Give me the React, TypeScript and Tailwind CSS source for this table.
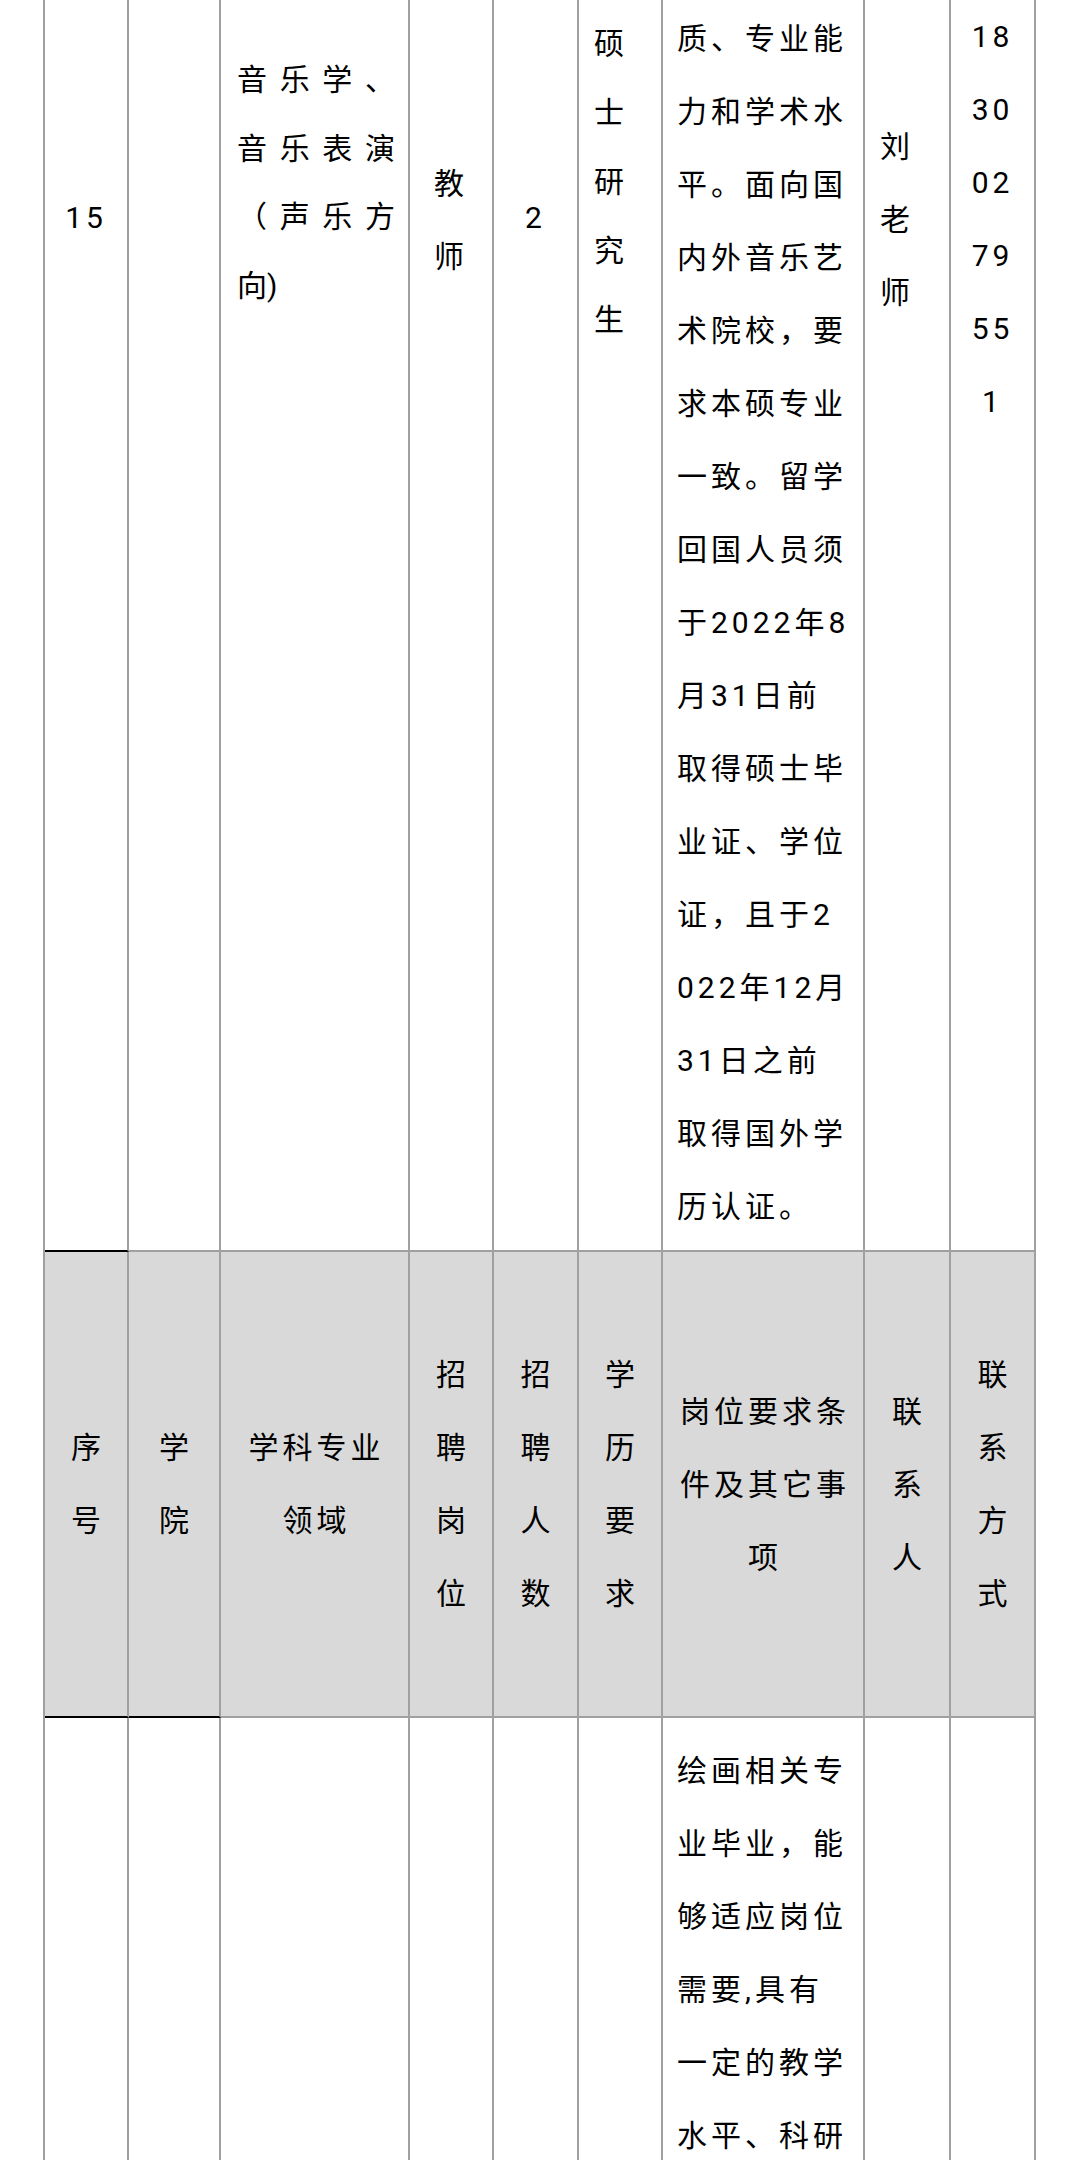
const COLS =
  "grid grid-cols-[84px_92px_189px_84px_85px_84px_202px_86px_85px] grid-rows-[1252px_466px_700px]"

const TEXT = "text-[30px] leading-[73px] tracking-[4px] text-black"

const DESC_TOP = [
  "质、专业能",
  "力和学术水",
  "平。面向国",
  "内外音乐艺",
  "术院校，要",
  "求本硕专业",
  "一致。留学",
  "回国人员须",
  "于2022年8",
  "月31日前",
  "取得硕士毕",
  "业证、学位",
  "证，且于2",
  "022年12月",
  "31日之前",
  "取得国外学",
  "历认证。",
]

const DESC_BOTTOM = ["绘画相关专", "业毕业，能", "够适应岗位", "需要,具有", "一定的教学", "水平、科研"]

const HEADER = [
  ["序", "号"],
  ["学", "院"],
  ["学科专业", "领域"],
  ["招", "聘", "岗", "位"],
  ["招", "聘", "人", "数"],
  ["学", "历", "要", "求"],
  ["岗位要求条", "件及其它事", "项"],
  ["联", "系", "人"],
  ["联", "系", "方", "式"],
]

function Lines({ lines }: { lines: string[] }) {
  return (
    <>
      {lines.map((l, i) => (
        <div key={i} className="whitespace-nowrap">
          {l}
        </div>
      ))}
    </>
  )
}

function cell(bottom: "gray" | "black" = "gray") {
  return `border-r-2 border-b-2 border-r-[#a0a0a0] ${bottom === "black" ? "border-b-black" : "border-b-[#a0a0a0]"}`
}

export default function App() {
  return (
    <div className="h-[2160px] w-[1080px] overflow-hidden bg-white [font-family:Roboto,'Noto_Sans_CJK_SC',sans-serif]">
      <div className={`${COLS} ${TEXT} ml-[43px] w-[993px] border-l-2 border-l-[#a0a0a0]`}>
        {/* row 15 (continues above) */}
        <div className={`${cell("black")} pt-[181px] text-center`}>15</div>
        <div className={cell()} />
        <div className={`${cell()} pt-[46px] pl-[16px] pr-[13px] leading-[68.5px] tracking-normal`}>
          {["音乐学、", "音乐表演", "（声乐方"].map((l) => (
            <div key={l} className="flex justify-between">
              {l.split("").map((c, i) => (
                <span key={i}>{c}</span>
              ))}
            </div>
          ))}
          <div>向)</div>
        </div>
        <div className={`${cell()} pt-[147px] text-center`}>
          <Lines lines={["教", "师"]} />
        </div>
        <div className={`${cell()} pt-[181px] text-center`}>2</div>
        <div className={`${cell()} pt-[9px] pl-[15px] leading-[69px]`}>
          <Lines lines={["硕", "士", "研", "究", "生"]} />
        </div>
        <div className={`${cell()} pt-[2px] pl-[14px]`}>
          <Lines lines={DESC_TOP} />
        </div>
        <div className={`${cell()} pt-[110px] pl-[15px]`}>
          <Lines lines={["刘", "老", "师"]} />
        </div>
        <div className={`${cell()} text-center`}>
          <Lines lines={["18", "30", "02", "79", "55", "1"]} />
        </div>

        {/* header row */}
        {HEADER.map((lines, i) => (
          <div
            key={i}
            className={`${cell(i < 2 ? "black" : "gray")} flex flex-col items-center justify-center bg-[#d9d9d9] pl-[4px] text-center`}
          >
            <Lines lines={lines} />
          </div>
        ))}

        {/* next row */}
        <div className={cell()} />
        <div className={cell()} />
        <div className={cell()} />
        <div className={cell()} />
        <div className={cell()} />
        <div className={cell()} />
        <div className={`${cell()} pt-[16px] pl-[14px]`}>
          <Lines lines={DESC_BOTTOM} />
        </div>
        <div className={cell()} />
        <div className={cell()} />
      </div>
    </div>
  )
}
